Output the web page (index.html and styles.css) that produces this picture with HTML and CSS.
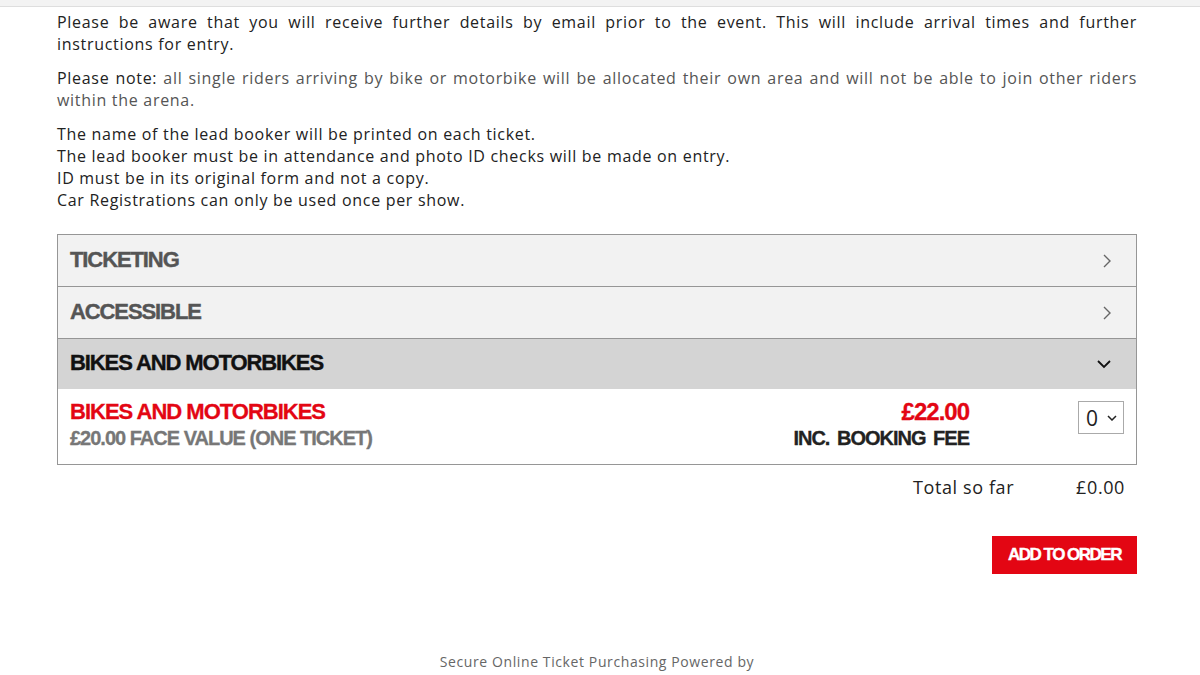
FILE: index.html
```html
<!DOCTYPE html>
<html lang="en">
<head>
  <meta charset="utf-8">
  <title>Tickets</title>
  <link rel="stylesheet" href="styles.css">
</head>
<body>
  <div class="top-band"></div>
  <div id="page">
    <!-- notes -->
    <p class="note">Please be aware that you will receive further details by email prior to the event. This will include arrival times and further instructions for entry.</p>
    <p class="note"><span class="dark">Please note:</span> <span class="grey">all single riders arriving by bike or motorbike will be allocated their own area and will not be able to join other riders within the arena.</span></p>
    <p class="rules">
      The name of the lead booker will be printed on each ticket.<br>
      The lead booker must be in attendance and photo ID checks will be made on entry.<br>
      ID must be in its original form and not a copy.<br>
      Car Registrations can only be used once per show.
    </p>

    <!-- ticket groups -->
    <div class="groups">
      <div class="group-head">
        <span>TICKETING</span>
        <svg class="chev" width="10" height="16" viewBox="0 0 10 16"><path d="M2 2 L8 8 L2 14" fill="none" stroke="#666" stroke-width="1.4"/></svg>
      </div>
      <div class="group-head">
        <span>ACCESSIBLE</span>
        <svg class="chev" width="10" height="16" viewBox="0 0 10 16"><path d="M2 2 L8 8 L2 14" fill="none" stroke="#666" stroke-width="1.4"/></svg>
      </div>
      <div class="group-head open">
        <span>BIKES AND MOTORBIKES</span>
        <svg class="chev down" width="16" height="10" viewBox="0 0 16 10"><path d="M2 2 L8 8 L14 2" fill="none" stroke="#111" stroke-width="1.8"/></svg>
      </div>
      <div class="ticket">
        <div class="ticket-name">
          <div class="t-title">BIKES AND MOTORBIKES</div>
          <div class="t-sub">£20.00 FACE VALUE (ONE TICKET)</div>
        </div>
        <div class="ticket-price">
          <div class="t-price">£22.00</div>
          <div class="t-fee">INC. BOOKING FEE</div>
        </div>
        <div class="qty">
          <span>0</span>
          <svg width="10" height="6" viewBox="0 0 10 6"><path d="M1 1 L5 5 L9 1" fill="none" stroke="#222" stroke-width="1.5"/></svg>
        </div>
      </div>
    </div>

    <div class="total">
      <span>Total so far</span>
      <span class="amount">£0.00</span>
    </div>

    <div class="actions">
      <a href="javascript:;" class="add-btn">ADD TO ORDER</a>
    </div>

    <p class="powered">Secure Online Ticket Purchasing Powered by</p>
  </div>
</body>
</html>
```

FILE: styles.css
```css
* {
  margin: 0;
  padding: 0;
  box-sizing: border-box;
}
body {
  font-family: "Open Sans", "Noto Sans", sans-serif;
  color: #222;
  background: #fff;
}
.top-band {
  height: 7px;
  background-color: #f3f3f3;
  border-bottom: 1px solid #dedede;
}
#page {
  width: 1080px;
  margin-left: 57px;
  padding-top: 4px;
}
.note, .rules {
  font-size: 16px;
  line-height: 22px;
  letter-spacing: 0.7px;
  text-align: justify;
  margin-bottom: 12px;
}
.note .dark {
  color: #222;
}
.note .grey {
  color: #555;
}
.rules {
  text-align: left;
  margin-bottom: 23px;
}
.groups {
  border: 1px solid #969696;
}
.group-head {
  display: flex;
  align-items: center;
  justify-content: space-between;
  height: 52px;
  padding: 0 24px 0 12px;
  background-color: #f2f2f2;
  border-bottom: 1px solid #969696;
  font-family: "Liberation Sans", Arial, sans-serif;
  font-weight: bold;
  font-size: 22px;
  letter-spacing: -1.1px;
  -webkit-text-stroke: 0.4px currentColor;
  color: #555;
}
.group-head span {
  padding-bottom: 2px;
}
.group-head.open {
  height: 50px;
  background-color: #d4d4d4;
  border-bottom: none;
  color: #111;
  padding-right: 24px;
}
.ticket {
  display: flex;
  align-items: flex-start;
  padding: 10px 12px 12px 12px;
  height: 75px;
  font-family: "Liberation Sans", Arial, sans-serif;
  font-weight: bold;
  letter-spacing: -1px;
  -webkit-text-stroke: 0.3px currentColor;
}
.ticket-name {
  flex: 1;
}
.t-title {
  color: #e30613;
  font-size: 22px;
  line-height: 26px;
}
.t-sub {
  color: #777;
  font-size: 20px;
  line-height: 26px;
}
.ticket-price {
  text-align: right;
}
.t-price {
  color: #e30613;
  font-size: 24px;
  line-height: 26px;
}
.t-fee {
  color: #222;
  font-size: 20px;
  line-height: 26px;
  word-spacing: 3px;
}
.qty {
  display: flex;
  align-items: center;
  justify-content: space-between;
  width: 46px;
  height: 33px;
  margin: 2px 0 0 109px;
  padding: 0 6px 0 7px;
  border: 1px solid #aaa;
  font-family: "Open Sans", sans-serif;
  font-weight: normal;
  font-size: 21px;
  letter-spacing: 0;
  -webkit-text-stroke: 0;
  color: #222;
}
.total {
  display: flex;
  justify-content: flex-end;
  gap: 62px;
  padding: 10px 12px 0 0;
  font-size: 18px;
  line-height: 24px;
  letter-spacing: 0.6px;
  color: #222;
}
.actions {
  display: flex;
  justify-content: flex-end;
  margin-top: 37px;
}
.add-btn {
  display: block;
  width: 145px;
  height: 38px;
  line-height: 38px;
  text-align: center;
  background-color: #e30613;
  color: #fff;
  text-decoration: none;
  font-family: "Liberation Sans", Arial, sans-serif;
  font-weight: bold;
  font-size: 17px;
  letter-spacing: -1.5px;
  -webkit-text-stroke: 0.4px #fff;
}
.powered {
  margin-top: 78px;
  text-align: center;
  font-size: 14px;
  letter-spacing: 0.6px;
  color: #666;
}
```
